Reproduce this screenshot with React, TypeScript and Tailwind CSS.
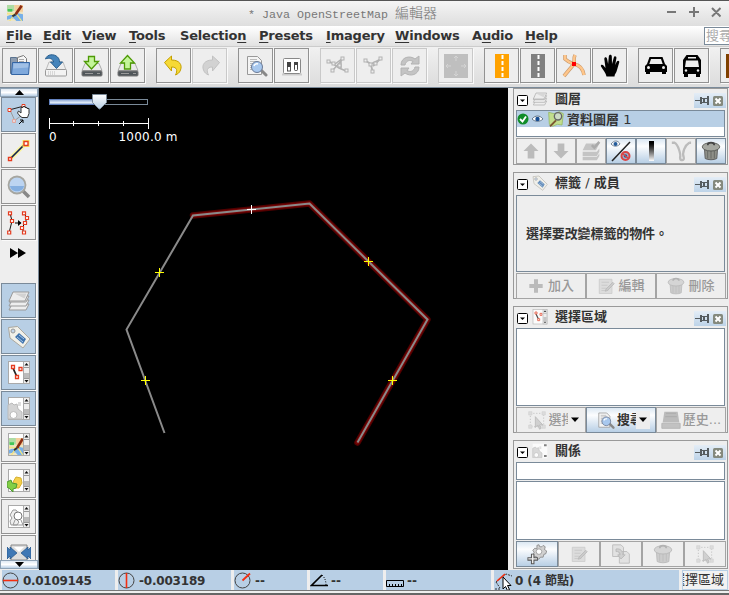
import React from "react";

const UI = "font-['DejaVu_Sans','Noto_Sans_CJK_TC',sans-serif]";

type SvgProps = { s?: number; children: React.ReactNode; dim?: boolean; className?: string };
function Svg({ s = 24, children, dim, className = "" }: SvgProps) {
  return (
    <svg viewBox="0 0 24 24" width={s} height={s} fill="none" className={`shrink-0 ${dim ? "opacity-35 grayscale" : ""} ${className}`}>
      {children}
    </svg>
  );
}

/* ---------- shared drawings ---------- */
const Drive = () => (
  <>
    <path d="M5 9.500h14l3 7H2z" fill="#e9e9e9" stroke="#aaa" />
    <rect x="2" y="17" width="20" height="5" rx="1" fill="#50565a" stroke="#777" />
    <path d="M5 19.500h8M17 19.500h3" stroke="#999" />
  </>
);
const FolderIcon = () => (
  <Svg>
    <path d="M2.500 3.500h6l1 2h7v14h-14z" fill="#8c9cb0" stroke="#5b738f" />
    <path d="M9.500 3.500l6-2 3 3V14h-9z" fill="#f5f5f5" stroke="#777" />
    <path d="M11 5.500h5M11 7.500h5" stroke="#aaa" />
    <path d="M4.500 8.500h17l-1 12h-17z" fill="#7fa9dc" stroke="#3465a4" />
    <path d="M5.500 9.500h15l-.3 4-15 1z" fill="#a0c0e6" />
  </Svg>
);
const SaveIcon = () => (
  <Svg>
    <path d="M5 8h14l3 8H2z" fill="#eee" stroke="#bbb" />
    <rect x="1.500" y="15.500" width="21" height="6.500" rx="1" fill="#f3f3f3" stroke="#999" />
    <path d="M4 18h8M4 20h8" stroke="#bbb" strokeDasharray="1 1" />
    <path d="M1.500 5C3 0 10-.5 13.500 3c1.500 1.500 2 3 2 5h3l-6 6.500L6.500 8h3.200C9 5 5 3 1.500 5z" fill="#4584bb" stroke="#2b5f8e" />
  </Svg>
);
const DownloadIcon = () => (
  <Svg><Drive /><path d="M8.500 2.500h6v5h4l-7 7.500-7-7.500h4z" fill="#c4f59a" stroke="#4e9a06" strokeWidth="1.300" /></Svg>
);
const UploadIcon = () => (
  <Svg><Drive /><path d="M8.500 15V9h-4l7-7.500 7 7.500h-4v6z" fill="#c4f59a" stroke="#4e9a06" strokeWidth="1.300" /></Svg>
);
const Undo = () => <path d="M2.500 8.500l7-6.500v4c8 0 11 5 9 10-1 3-3 4-5 5 2-4 2-8-4-8v4z" fill="#f6d936" stroke="#c4a000" />;
const PageSearch = () => (
  <>
    <path d="M3.500 2.500h10l4 4v14h-14z" fill="#f4f4f4" stroke="#999" />
    <path d="M6 5.500h7M6 7.500h8M6 9.500h4M6 11.500h3M6 13.500h3M6 15.500h3" stroke="#bbb" />
    <path d="M17 16l5 5" stroke="#888" strokeWidth="3" strokeLinecap="round" />
    <circle cx="13" cy="13" r="5.500" fill="#a8c8ee" stroke="#6b7a96" />
    <path d="M10 12a3 3 0 0 1 4-2" stroke="#fff" strokeWidth="1.500" />
  </>
);
const Prefs = () => (
  <Svg>
    <path d="M2 20.500h20" stroke="#ccc" strokeWidth="2" />
    <rect x="3.500" y="4.500" width="17" height="15" rx="1" fill="#fff" stroke="#888" />
    <rect x="7.500" y="9" width="3" height="8" fill="#fff" stroke="#555" />
    <path d="M7 8h4v5H7z" fill="#444" />
    <rect x="14.500" y="9.500" width="3" height="7" rx="1" fill="#fff" stroke="#444" />
    <path d="M14 8h4v3h-4z" fill="#444" />
  </Svg>
);
const nodes = (list: [number, number][]) => list.map(([x, y]) => <rect key={`${x}.${y}`} x={x} y={y} width="3" height="3" fill="#eee" stroke="#444" />);
const SplitIcon = () => (
  <Svg dim>
    <path d="M3 8l6 2 8-6M3 7l10 7 7 3M7 16l9-10M15 5v10" stroke="#444" strokeWidth="1.500" />
    {nodes([[1, 6], [6, 8], [15, 3], [5, 15], [19, 15], [12, 10]])}
  </Svg>
);
const CombineIcon = () => (
  <Svg dim>
    <path d="M4 7l5 3 10-5M9 11l2 8M17 6l-6 6" stroke="#444" strokeWidth="1.800" />
    {nodes([[2, 5], [7, 9], [17, 3], [9, 16], [12, 8]])}
  </Svg>
);
const RefreshIcon = () => (
  <Svg dim>
    <path d="M3 11C3 3 12 1 17 5l4-3v8h-8l2-2.500c-3-2-7-1-8 3.500z" fill="#777" stroke="#444" />
    <path d="M21 13c0 8-9 10-14 6l-4 3v-8h8l-2 2.500c3 2 7 1 8-3.500z" fill="#777" stroke="#444" />
  </Svg>
);
const MoveIcon = () => (
  <Svg>
    <rect width="24" height="24" fill="#bfbfbf" />
    <path d="M12 2v5M10 4l2-2 2 2M12 22v-5M10 20l2 2 2-2M2 12h5M4 10l-2 2 2 2M22 12h-5M20 10l2 2-2 2" stroke="#d4d4d4" />
  </Svg>
);
const Road = ({ c }: { c: string }) => (
  <Svg>
    <rect x="5" width="14" height="24" fill={c} />
    <path d="M12.500 1v4M12.500 7v4M12.500 13v4M12.500 19v4" stroke="#fff" strokeWidth="2" />
  </Svg>
);
const Junction = () => (
  <Svg>
    <path d="M3 1v4c3 3 6 4 9 5 5 1 9 5 10 11M13 1c-2 4 0 6-1 9L2 22" stroke="#c8996c" strokeWidth="3.600" />
    <path d="M3 1v4c3 3 6 4 9 5 5 1 9 5 10 11M13 1c-2 4 0 6-1 9L2 22" stroke="#ffc68a" strokeWidth="2.400" />
    <rect x="10" y="8" width="4" height="4" fill="#f00" />
  </Svg>
);
const Hand = () => (
  <Svg>
    <path d="M8.500 22.500C8 19 5 16 3 12.500c-.8-2 1.500-2.500 2.500-1L7.500 14 6.300 5c0-2.200 2.500-2.200 2.800 0l1 5L10.800 2.500c.2-2.200 3-2.200 3 0l.2 7.500 1.800-6.500c.6-2 3-1.300 2.600.8L17.200 11l1.600-3.500c1-1.600 3-.8 2.400 1L19 16c-.6 3-2.500 4-2.500 6.500z" fill="#000" />
  </Svg>
);
const Car = () => (
  <Svg>
    <path d="M5.500 3h13l2.500 7 2 2v6H1v-6l2-2z" fill="#000" />
    <path d="M7 5h10l1.700 5H5.300z" fill="#eee" />
    <path d="M2 17h4v3H2zM18 17h4v3h-4z" fill="#000" />
    <circle cx="4.500" cy="13.500" r="1.500" fill="#eee" /><circle cx="19.500" cy="13.500" r="1.500" fill="#eee" />
  </Svg>
);
const Bus = () => (
  <Svg>
    <path d="M6.500 1h11l3.500 5v14H3V6z" fill="#000" />
    <path d="M8 3h8v1.500H8zM6 6.500h12l1 6.500H5z" fill="#eee" />
    <circle cx="6" cy="16.500" r="1.200" fill="#eee" /><circle cx="18" cy="16.500" r="1.200" fill="#eee" />
    <path d="M4 20h4v3H4zM16 20h4v3h-4z" fill="#000" />
  </Svg>
);
const MapPic = () => (
  <>
    <rect width="24" height="24" fill="#eee5c3" />
    <path d="M0 0h11v9H0z" fill="#afdca4" /><path d="M1 6h7v4H1z" fill="#43c658" />
    <path d="M11 0h13v10H12z" fill="#f5ce9b" />
    <path d="M0 17c6-3 8-2 10 0l4-5 10 2v10H14l-4-4-10 2z" fill="#76afe8" />
    <path d="M13 12l9 12M13 12L4 24M0 13l13 1" stroke="#f5e57f" strokeWidth="1.800" />
    <path d="M22 1L13 14" stroke="#8c2c12" strokeWidth="4" /><path d="M13 14l-5 3" stroke="#333" strokeWidth="3" />
  </>
);
const Layers = () => (
  <>
    {[16, 12, 8].map((y) => <path key={y} d={`M5 ${y - 1}h17l-3 6H2z`} fill="#eee" stroke="#999" />)}
    <path d="M6 3h16l-4 9H2z" fill="#ededed" stroke="#999" />
    <path d="M7.500 4.500h12l-2 5z" fill="#d2d2d2" />
  </>
);
const Tag = () => (
  <>
    <path d="M1.500 2.500l9-1L23 14l-7 9L3 13z" fill="#f1f0e9" stroke="#aaa79e" />
    <circle cx="6" cy="6" r="2" fill="#c3d5ea" stroke="#999" />
    <path d="M8 12l4-4 7 6-3 5z" fill="#3f73ad" /><path d="M10 12l6 5M12 10l5 4" stroke="#a9c6e6" />
  </>
);
const Trash = () => (
  <>
    <path d="M4 8h16l-1 13c-3 2-11 2-14 0z" fill="#8e8f88" stroke="#555" />
    <path d="M8 12v9M12 12v9M16 12v9" stroke="#60635f" />
    <ellipse cx="12" cy="7" rx="10.500" ry="5" fill="#a6a8a1" stroke="#4e514c" />
    <path d="M8 5c0-4 8-4 8 0" stroke="#444" strokeWidth="2" />
  </>
);
const Select = () => (
  <>
    <path d="M4 4h16v16H4z" stroke="#666" strokeDasharray="1.500 2" />
    <path d="M2 2h4v4H2zM18 2h4v4h-4zM2 18h4v4H2zM18 18h4v4h-4z" fill="#bbb" stroke="#999" strokeWidth=".7" />
    <path d="M10 8v13l3-3 2 5 2-1-2-4h4z" fill="#999" stroke="#555" />
  </>
);
const Edit = () => (
  <>
    <path d="M3 3h17v19H3z" fill="#bbb" stroke="#888" /><path d="M6 7h10M6 11h8M6 15h7M6 18h9" stroke="#777" />
    <path d="M23 9l-9 9-3 1 1-3 9-9z" fill="#888" stroke="#555" />
  </>
);
const GearPath = () => (
  <path d="M8 2l3-1 1 3h3l2-2 3 2-1 4 3 2-1 4-3 1-1 4h-4l-2 3-3-1-1-3-3 1-2-4 2-3-2-3 3-3 3 1z" fill="#d0d0d0" stroke="#777" />
);
const ListScroll = () => (
  <>
    <rect x="16.500" y=".5" width="6" height="22" fill="#eee" stroke="#aaa" />
    <path d="M17 6.500h5M17 17.500h5" stroke="#999" /><path d="M17 12h5v5h-5z" fill="#bbb" />
    <path d="M17.500 4.500l2-2.500 2 2.500zM17.500 19l2 2.500 2-2.500z" fill="#111" />
  </>
);
const ListFrame = ({ children }: { children: React.ReactNode }) => (
  <>
    <rect x="1.500" y=".5" width="21" height="22" fill="#fff" stroke="#aaa" />{children}<ListScroll />
  </>
);
const SelNodes = () => (
  <>
    <path d="M6 7l4 9" stroke="#222" strokeWidth="1.800" />
    <g fill="#fff" stroke="#e53c20" strokeWidth="1.300"><path d="M4.500 4.500h3v3h-3zM12 6.500h3v3h-3zM8.500 14.500h3v3h-3z" /></g>
  </>
);
const GearList = () => (
  <>
    <path d="M1 8l4-2 2 2 3-1 1 5 4 3v7H1z" fill="#d4d4d4" stroke="#bbb" /><circle cx="6.500" cy="18" r="3.500" fill="#fff" stroke="#bbb" />
    <path d="M11 5h3v4h-3z" fill="#ddd" />
  </>
);

/* ---------- generic controls ---------- */
function Btn({ children, on, off }: { children: React.ReactNode; on?: boolean; off?: boolean }) {
  return (
    <div className={`flex h-[35px] w-[35px] shrink-0 items-center justify-center border shadow-[1px_1px_0_#fafafa] ${off ? "border-[#c9c9c9] bg-[#eee]" : on ? "border-[#7a8a99] bg-[#b8cfe5]" : "border-[#929292] bg-[#eee]"}`}>
      {children}
    </div>
  );
}
function Panel({ icon, title, h, children }: { icon: React.ReactNode; title: React.ReactNode; h: string; children: React.ReactNode }) {
  return (
    <section className={`flex w-[215px] shrink-0 flex-col border border-[#999] bg-[#eee] px-px pb-px ${h}`}>
      <header className="flex h-[21px] shrink-0 items-center pl-[2px]">
        <svg width="11" height="11" className="mt-[2px] shrink-0"><rect x=".5" y=".5" width="10" height="10" rx="1" fill="#fff" stroke="#000" /><path d="M3 4.500h5L5.500 7z" fill="#000" /></svg>
        <Svg s={16} className="mb-[2px] ml-[4px] opacity-80">{icon}</Svg>
        <h2 className="mb-[3px] ml-[7px] flex-1 text-[13px] leading-[17px] font-bold whitespace-pre text-[#333]">{title}</h2>
        <div className="mt-[2px] flex h-[15px] w-[32px] items-center gap-[3px] bg-linear-to-b from-[#e4edf6] to-[#bdd3e8] pl-px">
          <svg width="15" height="11" shapeRendering="crispEdges"><path d="M0 5h6v1H0zM5 2h2v7H5zM7 3h5v1H7zM7 7h5v1H7zM8 4h2v3H8zM12 1h2v9h-2z" fill="#555c60" /></svg>
          <svg width="10" height="10"><rect width="10" height="10" rx="1.500" fill="#84897d" /><path d="M2.500 2.500l5 5M7.500 2.500l-5 5" stroke="#fff" strokeWidth="2" /></svg>
        </div>
      </header>
      {children}
    </section>
  );
}
function PBtn({ children, on, w }: { children: React.ReactNode; on?: boolean; w: string }) {
  return (
    <div className={`flex h-[26px] shrink-0 items-center justify-center overflow-hidden border text-[13px] font-medium whitespace-nowrap ${w} ${on ? "border-[#7a8a99] bg-linear-to-b from-[#dce8f3] via-[#fcfdfe] via-30% to-[#b8cfe5] text-[#333]" : "border-[#a4a4a4] bg-[#eee] text-[#999]"}`}>
      {children}
    </div>
  );
}
const Caret = () => <svg width="9" height="6" className="shrink-0"><path d="M0 .5h8L4 5z" fill="#000" /></svg>;
const Gap = () => <div className="w-[9px] shrink-0" />;

const menus: [string, string, string, string][] = [
  ["", "F", "ile", "w-[37px]"], ["", "E", "dit", "w-[39px]"], ["", "V", "iew", "w-[47px]"], ["", "T", "ools", "w-[51px]"],
  ["Selectio", "n", "", "w-[79px]"], ["", "P", "resets", "w-[67px]"], ["", "I", "magery", "w-[69px]"], ["", "W", "indows", "w-[77px]"],
  ["A", "u", "dio", "w-[53px]"], ["", "H", "elp", "w-[40px]"],
];

const Arrow = ({ up }: { up?: boolean }) => (
  <div className="flex h-[9px] w-[38px] shrink-0 items-center justify-center border border-[#8ea2b5] bg-linear-to-b from-[#dfe9f3] via-white to-[#b8cfe5]">
    <svg width="9" height="5"><path d={up ? "M0 5h9L4.500 0z" : "M0 0h9L4.500 5z"} fill="#000" /></svg>
  </div>
);

function MapView() {
  const crosses: [number, number, string][] = [[251, 209, "#fff"], [368, 261, "#ff0"], [392, 380, "#ff0"], [159, 272, "#ff0"], [145, 380, "#ff0"]];
  return (
    <svg width="469" height="482" viewBox="39 88 469 482" className="block shrink-0 bg-black">
      <defs>
        <linearGradient id="thumb" x1="0" y1="0" x2="0" y2="1"><stop offset="0" stopColor="#fff" /><stop offset="1" stopColor="#b8cfe5" /></linearGradient>
        <linearGradient id="track" x1="0" y1="0" x2="0" y2="1"><stop offset="0" stopColor="#8aa4d0" /><stop offset=".6" stopColor="#dce8f6" /><stop offset="1" stopColor="#8aa4d0" /></linearGradient>
      </defs>
      <rect x="49.500" y="99.500" width="98" height="5" fill="#000" stroke="#7a8a99" />
      <rect x="49.500" y="99.500" width="48" height="5" fill="url(#track)" stroke="#6382bf" />
      <path d="M92.500 94.500h14v8l-6.500 6.500h-1l-6.500-6.500z" fill="url(#thumb)" stroke="#7a8a99" />
      <path d="M49.500 118v11M148.500 118v11M49 123.500h100M73.500 121v5M98.500 121v5M123.500 121v5" stroke="#fff" />
      <g fill="#fff" className="font-['DejaVu_Sans',sans-serif] text-[12px]">
        <text x="49" y="141">0</text><text x="118.500" y="141" textLength="59">1000.0 m</text>
      </g>
      <path d="M193 215.500L309.500 203.500 427.500 319.500 357.500 442.500" stroke="#500000" strokeWidth="6.500" fill="none" strokeLinecap="round" strokeLinejoin="round" />
      <path d="M193 215.500L309.500 203.500 427.500 319.500 357.500 442.500" stroke="#780505" strokeWidth="4" fill="none" strokeLinecap="round" strokeLinejoin="round" />
      <path d="M164.500 433L126.500 329.500 193 215.500 309.500 203.500 427.500 319.500 357.500 442.500" stroke="#8a8a8a" strokeWidth="2" fill="none" />
      {crosses.map(([x, y, c]) => <path key={`${x}-${y}`} d={`M${x - 4} ${y + 0.5}h9M${x + 0.5} ${y - 4}v9`} stroke={c} />)}
    </svg>
  );
}

function Cell({ w, icon, children }: { w: string; icon: React.ReactNode; children: React.ReactNode }) {
  return (
    <div className={`mr-[3px] flex h-[20px] shrink-0 items-center overflow-hidden bg-[#b8cfe5] pt-px text-[12px] font-bold whitespace-nowrap text-[#333] ${w}`}>
      {icon}<span className="ml-[4px]">{children}</span>
    </div>
  );
}

export default function App() {
  return (
    <div className={`flex h-[595px] w-[729px] flex-col overflow-hidden bg-[#eee] ${UI}`}>
      <div className="flex h-[26px] shrink-0 items-center border-t border-[#555] bg-linear-to-b from-[#f5f5f5] to-[#dedede] px-[7px]">
        <Svg s={16} className="mb-px"><MapPic /></Svg>
        <h1 className="ml-[225px] flex-1 font-['Liberation_Mono','Noto_Sans_CJK_TC',monospace] text-[11.67px] leading-[19px] whitespace-pre text-[#777]">
          * Java OpenStreetMap <span className="font-['Noto_Sans_CJK_TC',sans-serif] text-[14px] font-light">編輯器</span>
        </h1>
        <svg width="54" height="12" className="mr-px mb-[3px]" stroke="#777" strokeWidth="2"><path d="M0 6h9M22 6h10M27 1v10M45 2l8.500 8.500M53.500 2L45 10.500" /></svg>
      </div>

      <nav className="flex h-[20px] shrink-0 items-center bg-linear-to-b from-white to-[#e2e2e2] pl-[6px] text-[13px] font-bold tracking-[-0.2px] text-[#333]">
        {menus.map(([a, u, b, w]) => (
          <span key={a + u + b} className={`${w} shrink-0 leading-[18px]`}>{a}<span className="underline underline-offset-2">{u}</span>{b}</span>
        ))}
        <div className="ml-auto h-[18px] w-[25px] overflow-hidden border border-r-0 border-[#7a8a99] bg-white pl-px text-[13px] leading-[16px] font-normal tracking-normal whitespace-nowrap text-[#aaa]">搜尋</div>
      </nav>

      <div className="flex h-[41px] shrink-0 gap-px overflow-hidden border-t border-[#ccc] bg-linear-to-b from-[#f1f1f1] to-[#dcdcdc] pt-px pl-[2px]">
        <Btn><FolderIcon /></Btn><Btn><SaveIcon /></Btn><Btn><DownloadIcon /></Btn><Btn><UploadIcon /></Btn><Gap />
        <Btn><Svg><Undo /></Svg></Btn><Btn off><Svg className="-scale-x-100"><path d="M2.500 8.500l7-6.500v4c8 0 11 5 9 10-1 3-3 4-5 5 2-4 2-8-4-8v4z" fill="#d2d2d2" stroke="#c2c2c2" /></Svg></Btn><Gap />
        <Btn><Svg><PageSearch /></Svg></Btn><Btn><Prefs /></Btn><Gap />
        <Btn off><SplitIcon /></Btn><Btn off><CombineIcon /></Btn><Btn off><RefreshIcon /></Btn><Gap />
        <Btn off><MoveIcon /></Btn><Gap />
        <Btn><Road c="#ffa200" /></Btn><Btn><Road c="#808080" /></Btn><Btn><Junction /></Btn><Btn><Hand /></Btn><Gap />
        <Btn><Car /></Btn><Btn><Bus /></Btn><Gap />
        <Btn><Svg><rect x="0" width="24" height="24" fill="#804000" /></Svg></Btn>
      </div>

      <div className="flex h-[482px] shrink-0 border-t border-[#7a8a99]">
        <aside className="flex w-[39px] shrink-0 flex-col overflow-hidden border-r border-[#7a8a99]">
          <Arrow up />
          <div className="flex h-[463px] flex-col gap-px overflow-hidden pl-px">
            <Btn on><Svg><path d="M2 7l15-4" stroke="#222" /><path d="M3 7l5 11M7 18l8-6" stroke="#999" /><g fill="#fff" stroke="#e53c20"><path d="M1 5.500h3v3H1zM15 1.500h3v3h-3z" /></g><path d="M5.500 16.500h3v3h-3z" fill="#e8d6d8" stroke="#e3a69f" /><path d="M13 13l-2.500-3 1-2 2.500 2V4.500h2V3.500h2v1h2v1h2v5l-1.500 4h-5.500z" fill="#fff" stroke="#333" /><path d="M13 17h3v3M16 17l-4 4" stroke="#000" /></Svg></Btn>
            <Btn><Svg><path d="M4 19L19 4" stroke="#fbf59d" strokeWidth="4.500" /><path d="M3 20L19 4" stroke="#12254d" strokeWidth="1.700" /><path d="M15.500 1h7v7h-7z" fill="#f8ec67" /><path d="M17 2.500h4v4h-4zM1.500 18.500h3v3h-3z" fill="#fff" stroke="#e53c20" strokeWidth="1.400" /></Svg></Btn>
            <Btn><Svg><path d="M16 16l6 6" stroke="#888" strokeWidth="3.500" /><circle cx="10" cy="10" r="8.500" fill="#bcd4f1" stroke="#a6a6a0" strokeWidth="1.800" /><path d="M3 11h14c-1 7-13 7-14 0z" fill="#85afe0" /></Svg></Btn>
            <Btn><Svg><path d="M3 2l2 8-3 12M17 2l3 5-2 5-3 5 2 5" stroke="#111" /><path d="M8 12h6" stroke="#000" /><path d="M11 9l3.500 3-3.500 3z" fill="#000" /><g fill="#fff" stroke="#e53c20" strokeWidth="1.200"><path d="M1.500.8h3v3h-3zM3.500 8.500h3v3h-3zM.7 20h3v3h-3zM15.500.8h3v3h-3zM18.500 5.500h3v3h-3zM16.500 10.500h3v3h-3zM13.500 15.500h3v3h-3zM15.500 20h3v3h-3z" /></g></Svg></Btn>
            <div className="flex h-[41px] shrink-0 justify-center pt-[7px] pr-[2px]"><svg width="17" height="10"><path d="M0 0l8 5-8 5zM8 0l8 5-8 5z" fill="#000" /></svg></div>
            <Btn on><Svg><Layers /></Svg></Btn>
            <Btn on><Svg><Tag /></Svg></Btn>
            <Btn on><Svg><ListFrame><SelNodes /></ListFrame></Svg></Btn>
            <Btn on><Svg><ListFrame><GearList /></ListFrame></Svg></Btn>
            <Btn><Svg><ListFrame><svg x="2" y="5" width="15" height="17" viewBox="0 0 24 24" preserveAspectRatio="none"><MapPic /></svg></ListFrame></Svg></Btn>
            <Btn><Svg><ListFrame><path d="M6 13l3-5 5 1 1 5-3 5H8z" fill="#f5d04a" stroke="#d5b030" /><path d="M0 13l4-2 1 3 5 1-1 4-3 1v3l-3-3-3-2z" fill="#82cf45" stroke="#4e9a32" /></ListFrame></Svg></Btn>
            <Btn><Svg><ListFrame><path d="M3 10l3-5h3l3 4-3 5 3 3-2 3H4l-1-4 2-3z" fill="#eee" stroke="#999" /><circle cx="11" cy="11" r="4" fill="#fff" stroke="#777" /><path d="M8 15l-2 5h10l-2-5" stroke="#999" /></ListFrame></Svg></Btn>
            <Btn><Svg><path d="M4 4h16v15H4z" fill="#ddd" stroke="#888" /><path d="M7 6h10l-5 5z" fill="#fff" /><path d="M0 6l3 3V6l7 6-7 6v-3l-3 3zM24 6l-3 3V6l-7 6 7 6v-3l3 3z" fill="#3f78b5" stroke="#235386" strokeWidth=".7" /></Svg></Btn>
          </div>
          <Arrow />
        </aside>

        <MapView />

        <div className="flex flex-1 flex-col gap-[7px] pl-[5px]">
          <Panel icon={<Layers />} title="圖層" h="h-[77px]">
            <div className="mx-px h-[27px] shrink-0 border border-[#7a8a99] bg-white">
              <div className="flex h-[16px] items-center bg-[#b8cfe5] text-[#333]">
                <svg width="12" height="12"><circle cx="6" cy="6" r="5.500" fill="#108c28" /><path d="M3 6l2.500 2.500L9 3.500" stroke="#fff" strokeWidth="1.800" fill="none" /></svg>
                <svg width="12" height="8" className="ml-[3px]"><path d="M0 4c3-4 8-4 11 0-3 3-8 3-11 0z" fill="#fff" stroke="#678" /><circle cx="5.500" cy="4" r="2.200" fill="#164d91" /></svg>
                <Svg s={16} className="ml-[4px]"><path d="M1 2l8 2 8-3 6 3-2 17-7-1-7 3-5-3z" fill="#c2de8d" stroke="#8eb454" /><path d="M12 14L3 23" stroke="#7c5630" strokeWidth="3" /><circle cx="15" cy="8" r="5.500" fill="#cddcc5" stroke="#666" strokeWidth="2" /></Svg>
                <span className="mt-px ml-[3px] text-[13px] leading-[15px]"><span className="font-bold">資料圖層</span> 1</span>
              </div>
            </div>
            <div className="mt-px ml-px flex">
              <PBtn w="w-[30px]"><Svg s={20}><path d="M8 21v-9H3l9-9 9 9h-5v9z" fill="#bbb" /></Svg></PBtn>
              <PBtn w="w-[30px]"><Svg s={20}><path d="M8 3v9H3l9 9 9-9h-5V3z" fill="#bbb" /></Svg></PBtn>
              <PBtn w="w-[30px]"><Svg s={20}><path d="M6 3h16l-4 8H2zM2 13h17l3-4v4l-3 5H2zM2 19h17l3-4v3l-3 5H2z" fill="#c4c4c4" /><path d="M13 5l3 3 6-7" stroke="#aaa" strokeWidth="3" /></Svg></PBtn>
              <PBtn on w="w-[30px]"><Svg><path d="M3 22L21 3" stroke="#222" strokeWidth="1.500" /><path d="M2 5c3-4 7-4 9 0-3 3-6 3-9 0z" fill="#fff" stroke="#789" /><circle cx="6.500" cy="5" r="2" fill="#235b9a" /><circle cx="16.500" cy="17" r="4" stroke="#d94444" strokeWidth="2" fill="#9fb3cc" /><circle cx="16.500" cy="17" r="1.800" fill="#235b9a" /><path d="M13.500 14.500l6 5" stroke="#d94444" strokeWidth="1.600" /></Svg></PBtn>
              <PBtn on w="w-[30px]"><div className="h-[20px] w-[5px] bg-linear-to-b from-black to-white" /></PBtn>
              <PBtn w="w-[30px]"><Svg s={22}><path d="M2 3h3c4 2 7 13 6 16 0 4 5 4 4 0-2-5 1-13 6-16M21 3h2" stroke="#bbb" strokeWidth="2.500" /></Svg></PBtn>
              <PBtn on w="w-[30px]"><Svg s={20}><Trash /></Svg></PBtn>
            </div>
          </Panel>

          <Panel icon={<Tag />} title={<>標籤<span className="font-normal"> / </span>成員</>} h="h-[127px]">
            <div className="mx-px mt-px h-[77px] shrink-0 border border-[#7a8a99] pt-[28px] pl-[9px] text-[13px] leading-[20px] font-bold tracking-[-0.1px] whitespace-nowrap text-[#333]">選擇要改變標籤的物件。</div>
            <div className="mt-px ml-px flex">
              <PBtn w="w-[70px]"><Svg s={16} className="mr-[4px]"><path d="M9 2h6v7h7v6h-7v7H9v-7H2V9h7z" fill="#bbb" /></Svg>加入</PBtn>
              <PBtn w="w-[70px]"><Svg s={18} dim className="mr-[3px]"><Edit /></Svg>編輯</PBtn>
              <PBtn w="w-[70px]"><Svg s={18} dim className="mr-[3px]"><Trash /></Svg>刪除</PBtn>
            </div>
          </Panel>

          <Panel icon={<ListFrame><SelNodes /></ListFrame>} title="選擇區域" h="h-[127px]">
            <div className="mx-px h-[78px] shrink-0 border border-[#7a8a99] bg-white" />
            <div className="mt-px ml-px flex">
              <PBtn w="w-[70px]"><Svg s={20} dim className="ml-[4px]"><Select /></Svg><span className="ml-[2px] w-[19px] overflow-hidden">選擇</span><span className="ml-[3px]"><Caret /></span></PBtn>
              <PBtn on w="w-[70px]"><Svg s={19} className="ml-[4px]"><PageSearch /></Svg><span className="ml-[2px] w-[19px] overflow-hidden font-bold">搜尋</span><span className="flex h-[18px] w-[14px] items-center justify-center bg-[#eee]"><Caret /></span></PBtn>
              <PBtn w="w-[70px]"><Svg s={20}><path d="M4 2h16l2 13H2z" fill="#bbb" /><path d="M6 4h12M5 8h14" stroke="#aaa" /><path d="M1 16h22v6H1z" fill="#c2c2c2" stroke="#b2b2b2" /></Svg><span className="ml-[2px]">歷史...</span></PBtn>
            </div>
          </Panel>

          <Panel icon={<g><path d="M1 1h22v22H1z" fill="#fff" /><GearList /><path d="M18 2h4v3h-4zM18 18h4v3h-4z" fill="#666" /></g>} title="關係" h="h-[129px]">
            <div className="mx-px h-[18px] shrink-0 border border-[#7a8a99] bg-white" />
            <div className="mx-px mt-px h-[59px] shrink-0 border border-[#7a8a99] bg-white" />
            <div className="mt-px ml-px flex">
              <PBtn on w="w-[42px]"><Svg s={21}><svg x="5" y="0" width="19" height="19" viewBox="0 0 24 24"><GearPath /><circle cx="11" cy="11" r="4" fill="#fff" stroke="#888" /></svg><path d="M6.500 11v12M.5 17h12" stroke="#555" strokeWidth="4" /><path d="M6.500 12v10M1.500 17h10" stroke="#eee" strokeWidth="1.700" /></Svg></PBtn>
              <PBtn w="w-[42px]"><Svg s={18} dim><Edit /></Svg></PBtn>
              <PBtn w="w-[42px]"><Svg s={20} dim><path d="M2 1h10l3 3v11H2zM10 9h9l3 3v11H10z" fill="#ccc" stroke="#555" /><path d="M6 6c6-1 8 3 8 7h3l-5 5-4-5h3c0-3-2-4-5-4z" fill="#999" stroke="#555" /></Svg></PBtn>
              <PBtn w="w-[42px]"><Svg s={20} dim><Trash /></Svg></PBtn>
              <PBtn w="w-[42px]"><Svg s={20} dim><Select /></Svg></PBtn>
            </div>
          </Panel>
        </div>
      </div>

      <footer className="flex h-[22px] shrink-0 items-center border-b border-[#777] pt-px pl-[2px]">
        <Cell w="w-[113px]" icon={<svg width="17" height="17" className="shrink-0"><circle cx="8.500" cy="8.500" r="7.500" fill="none" stroke="#444" /><path d="M1 8.500h15" stroke="#f42e10" strokeWidth="1.600" /></svg>}><span className="tracking-[-0.3px]">0.0109145</span></Cell>
        <Cell w="w-[113px]" icon={<svg width="17" height="17" className="shrink-0"><circle cx="8.500" cy="8.500" r="7.500" fill="none" stroke="#444" /><path d="M8.500 1v15" stroke="#f42e10" strokeWidth="1.600" /></svg>}><span className="tracking-[-0.2px]">-0.003189</span></Cell>
        <Cell w="w-[73px]" icon={<svg width="17" height="17" className="shrink-0"><circle cx="8.500" cy="8.500" r="7.500" fill="none" stroke="#444" /><path d="M8.500 8.500L16 1.500" stroke="#f42e10" strokeWidth="1.800" /></svg>}>--</Cell>
        <Cell w="w-[73px]" icon={<svg width="18" height="17" className="shrink-0"><path d="M18 13.500H1.500L12 3" stroke="#000" strokeWidth="1.600" fill="none" /><path d="M12 3c3 3 4 6 4 10" stroke="#000" strokeDasharray="1 1.500" fill="none" /></svg>}><span className="-ml-px">--</span></Cell>
        <Cell w="w-[105px]" icon={<svg width="18" height="17" className="shrink-0"><path d="M.5 8.500h17v6H.5zM3.500 14v-2M6.500 14v-2M9.500 14v-2M12.500 14v-2M15.500 14v-2" stroke="#000" fill="none" /></svg>}><span className="-ml-px">--</span></Cell>
        <Cell w="w-[185px]" icon={<svg width="18" height="18" className="shrink-0"><path d="M2 10L12 2l6 2M2 10l4 6M1 17h6" stroke="#333" strokeDasharray="2 1" fill="none" /><path d="M3 9l8-7" stroke="#f42e10" strokeWidth="1.600" /><path d="M9 5v12l2.500-2.500 2 4 2-1-2-4H17z" fill="#fff" stroke="#000" /></svg>}><span className="-ml-px tracking-[-0.1px]">0 (4 節點)</span></Cell>
        <div className="flex h-[20px] w-[46px] shrink-0 justify-end overflow-hidden border border-[#b8cfe5] bg-[#f2f2f2] pr-[3px] text-[13px] leading-[18px] whitespace-nowrap text-[#333]">選擇區域</div>
      </footer>
      <div className="h-[2px] shrink-0 bg-[#eee]" />
      <div className="flex-1 bg-[#666]" />
    </div>
  );
}
